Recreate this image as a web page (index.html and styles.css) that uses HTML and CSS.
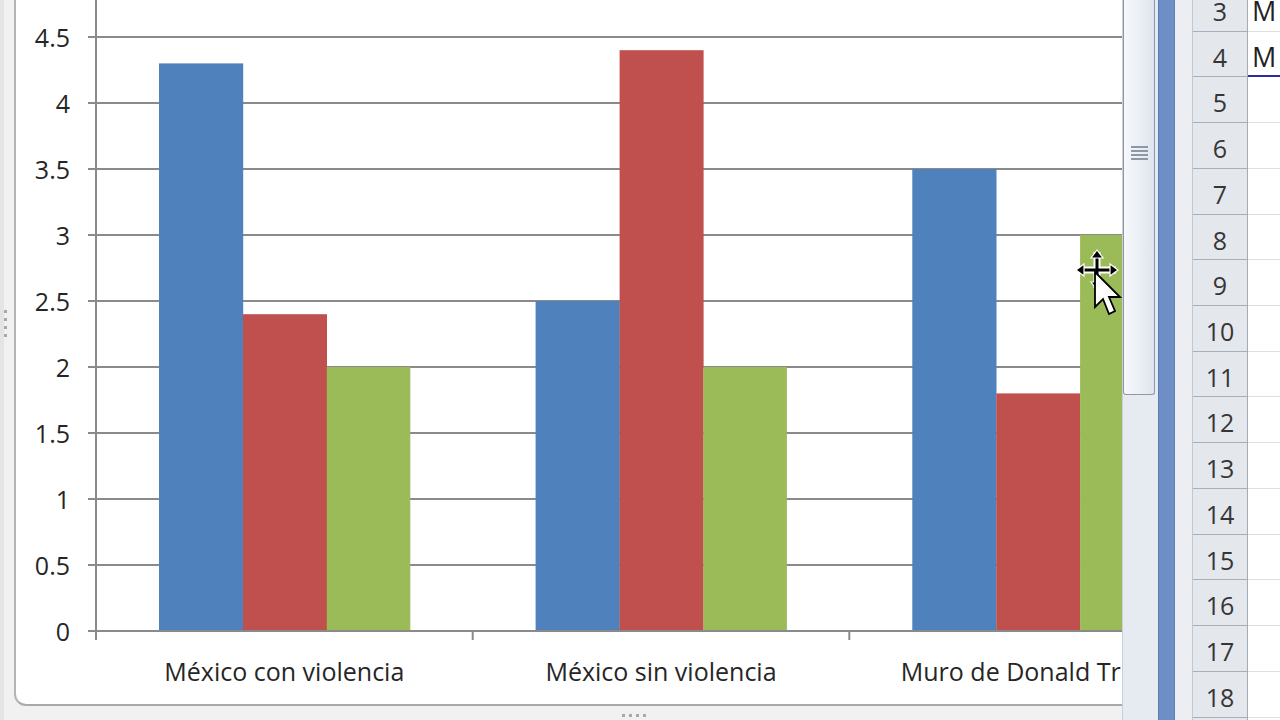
FILE: index.html
```html
<!DOCTYPE html>
<html lang="es">
<head>
<meta charset="utf-8">
<title>Gráfico</title>
<link rel="stylesheet" href="styles.css">
</head>
<body>
<div class="screen">
  <div class="chart-pane">
    <div class="frame">
      <div class="y-labels">
        <span>4.5</span><span>4</span><span>3.5</span><span>3</span><span>2.5</span>
        <span>2</span><span>1.5</span><span>1</span><span>0.5</span><span>0</span>
      </div>
      <svg class="plot" width="1034" height="640" viewBox="0 0 1034 640">
        <g class="grid">
          <line x1="0" y1="37" x2="1034" y2="37"/>
          <line x1="0" y1="103" x2="1034" y2="103"/>
          <line x1="0" y1="169" x2="1034" y2="169"/>
          <line x1="0" y1="235" x2="1034" y2="235"/>
          <line x1="0" y1="301" x2="1034" y2="301"/>
          <line x1="0" y1="367" x2="1034" y2="367"/>
          <line x1="0" y1="433" x2="1034" y2="433"/>
          <line x1="0" y1="499" x2="1034" y2="499"/>
          <line x1="0" y1="565" x2="1034" y2="565"/>
        </g>
        <g class="bars">
          <rect class="s1" x="71" y="63.4" width="84.2" height="567.6"/>
          <rect class="s2" x="155" y="314.2" width="84" height="316.8"/>
          <rect class="s3" x="238.8" y="367" width="83.5" height="264"/>
          <rect class="s1" x="447.6" y="301" width="84.2" height="330"/>
          <rect class="s2" x="531.6" y="50.2" width="84" height="580.8"/>
          <rect class="s3" x="615.4" y="367" width="83.5" height="264"/>
          <rect class="s1" x="824.3" y="169" width="84.2" height="462"/>
          <rect class="s2" x="908.3" y="393.4" width="84" height="237.6"/>
          <rect class="s3" x="992.1" y="235" width="83.5" height="396"/>
        </g>
        <g class="axis">
          <line x1="0" y1="631" x2="1034" y2="631"/>
          <line x1="8" y1="0" x2="8" y2="640"/>
          <line x1="384.7" y1="631" x2="384.7" y2="640"/>
          <line x1="761.3" y1="631" x2="761.3" y2="640"/>
        </g>
      </svg>
      <div class="x-labels">
        <span>México con violencia</span>
        <span>México sin violencia</span>
        <span>Muro de Donald Trump</span>
      </div>
    </div>
    <div class="grip-bottom"><i></i><i></i><i></i><i></i></div>
    <div class="grip-left"><i></i><i></i><i></i><i></i></div>
    <svg class="cursor" width="52" height="76" viewBox="0 0 52 76">
      <g class="move-outline">
        <path d="M25 7 V43 M6 25 H44"/>
      </g>
      <g class="move">
        <path class="shaft" d="M25 12 V38 M11 25 H39"/>
        <polygon points="25,5 19,13 31,13"/>
        <polygon points="25,45 19,37 31,37"/>
        <polygon points="4,25 12,19 12,31"/>
        <polygon points="46,25 38,19 38,31"/>
      </g>
      <polygon class="pointer" points="23,27 23,62 31,54 37,69 43,66 37,52 48,52"/>
    </svg>
  </div>

  <div class="vscroll">
    <div class="thumb">
      <div class="thumb-grip"><i></i><i></i><i></i><i></i></div>
    </div>
  </div>
  <div class="splitbar"></div>
  <div class="gutter"></div>

  <div class="row-heads">
    <div class="rh">3</div><div class="rh">4</div><div class="rh">5</div><div class="rh">6</div>
    <div class="rh">7</div><div class="rh">8</div><div class="rh">9</div><div class="rh">10</div>
    <div class="rh">11</div><div class="rh">12</div><div class="rh">13</div><div class="rh">14</div>
    <div class="rh">15</div><div class="rh">16</div><div class="rh">17</div><div class="rh">18</div>
  </div>
  <div class="cells">
    <div class="cell">M</div><div class="cell sel">M</div><div class="cell"></div><div class="cell"></div>
    <div class="cell"></div><div class="cell"></div><div class="cell"></div><div class="cell"></div>
    <div class="cell"></div><div class="cell"></div><div class="cell"></div><div class="cell"></div>
    <div class="cell"></div><div class="cell"></div><div class="cell"></div><div class="cell"></div>
  </div>
</div>
</body>
</html>
```

FILE: styles.css
```css
* { box-sizing: border-box; }

html, body {
  margin: 0;
  padding: 0;
  width: 1280px;
  height: 720px;
  overflow: hidden;
  background: #ececec;
  font-family: "Open Sans", "Liberation Sans", sans-serif;
}

.screen {
  display: flex;
  width: 1280px;
  height: 720px;
}

/* ---------- chart pane ---------- */
.chart-pane {
  position: relative;
  flex: 0 0 1122px;
  height: 720px;
  overflow: hidden;
  background: linear-gradient(to right, #e4e4e4 0, #e4e4e4 4px, #f1f1f1 4px, #f1f1f1 100%);
}

.frame {
  box-sizing: content-box;
  margin-left: 14px;
  width: 1106px;
  height: 704px;
  border-left: 2px solid #b4b4b4;
  border-bottom: 2px solid #a9a9a9;
  border-bottom-left-radius: 12px;
  background: #ffffff;
  display: grid;
  grid-template-columns: 72px 1034px;
  grid-template-rows: 640px 64px;
  overflow: hidden;
  color: #262626;
}

.y-labels {
  display: flex;
  flex-direction: column;
  padding-top: 4px;
  padding-right: 18px;
  font-size: 25px;
  text-align: right;
}
.y-labels span {
  display: block;
  height: 66px;
  line-height: 66px;
}

.plot { display: block; }
.grid line, .axis line {
  stroke: #8a8a8a;
  stroke-width: 2;
}
.s1 { fill: #4f81bd; }
.s2 { fill: #c0504d; }
.s3 { fill: #9bbb59; }

.x-labels {
  grid-column: 2;
  display: flex;
  padding-left: 8px;
  font-size: 25px;
  line-height: 62px;
  white-space: nowrap;
  overflow: hidden;
}
.x-labels span {
  flex: 0 0 376.67px;
  text-align: center;
}

/* resize grips (overlay on frame edges) */
.grip-bottom {
  position: absolute;
  left: 622px;
  top: 714px;
  display: flex;
  gap: 4px;
}
.grip-left {
  position: absolute;
  left: 4px;
  top: 310px;
  display: flex;
  flex-direction: column;
  gap: 5px;
}
.grip-bottom i, .grip-left i {
  display: block;
  width: 3px;
  height: 3px;
  background: #a8a8a8;
}

/* mouse cursor */
.cursor {
  position: absolute;
  left: 1072px;
  top: 245px;
}
.move-outline path {
  fill: none;
  stroke: #ffffff;
  stroke-width: 7;
}
.move .shaft {
  fill: none;
  stroke: #000000;
  stroke-width: 3;
}
.move polygon {
  fill: #000000;
  stroke: #ffffff;
  stroke-width: 1.2;
}
.pointer {
  fill: #ffffff;
  stroke: #000000;
  stroke-width: 1.8;
  stroke-linejoin: miter;
}

/* ---------- vertical scrollbar ---------- */
.vscroll {
  flex: 0 0 36px;
  height: 720px;
  background: #e6ebf2;
  border-left: 1px solid #c9cfd8;
}
.thumb {
  width: 32px;
  height: 395px;
  border: 1px solid #8f99a6;
  border-top: none;
  border-radius: 0 0 3px 3px;
  background: linear-gradient(to right, #f6f8fb, #e9edf3 60%, #dfe5ed);
  display: flex;
  justify-content: center;
  padding-top: 146px;
}
.thumb-grip {
  display: flex;
  flex-direction: column;
  gap: 2px;
  width: 17px;
}
.thumb-grip i {
  display: block;
  height: 2px;
  background: #8e98a4;
}

.splitbar {
  flex: 0 0 17px;
  height: 720px;
  background: #6d8fc6;
  border-left: 1px solid #5a7cb5;
  border-right: 1px solid #5f80b6;
}
.gutter {
  flex: 0 0 17px;
  height: 720px;
  background: #eceef2;
}

/* ---------- row headers & cells ---------- */
.row-heads {
  flex: 0 0 56px;
  margin-top: -14px;
  background: #e4e7ec;
  border-left: 1px solid #c2c8d0;
  border-right: 1px solid #a4acb6;
}
.rh {
  height: 45.73px;
  padding-top: 3px;
  border-bottom: 1px solid #a8afb8;
  font-size: 25px;
  line-height: 45px;
  text-align: center;
  color: #363636;
}

.cells {
  flex: 1 1 auto;
  margin-top: -14px;
  background: #ffffff;
  overflow: hidden;
}
.cell {
  height: 45.73px;
  padding-top: 3px;
  border-bottom: 1px solid #dcdfe3;
  padding-left: 4px;
  font-size: 27px;
  line-height: 44px;
  color: #222222;
  white-space: nowrap;
}
.cell.sel {
  border-bottom: 2px solid #2c2ca8;
}
```
